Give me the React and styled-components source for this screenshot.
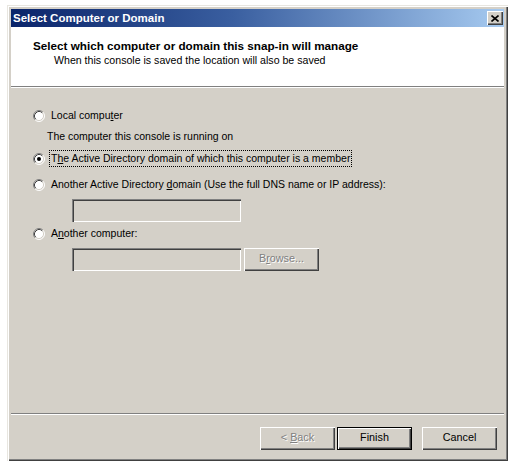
import React from "react";
import styled, { createGlobalStyle, css } from "styled-components";

const Global = createGlobalStyle`
  html, body { margin: 0; padding: 0; background: #ffffff; }
  body { font-family: "Liberation Sans", Arial, sans-serif; font-size: 10.5px; color: #000; }
  * { box-sizing: border-box; }
`;

const Page = styled.div`
  width: 516px;
  height: 468px;
  padding: 5px 0 0 7px;
`;

const Window = styled.div`
  width: 501px;
  height: 456px;
  display: flex;
  flex-direction: column;
  background: #d4d0c8;
  padding: 4px;
  box-shadow: inset 1px 1px 0 #e8e6e0, inset 2px 2px 0 #ffffff,
    inset -1px -1px 0 #404040, inset -2px -2px 0 #808080;
`;

const TitleBar = styled.div`
  height: 18px;
  flex: none;
  display: flex;
  align-items: center;
  justify-content: space-between;
  padding: 0 1px 0 2px;
  background: linear-gradient(to right, #0a246a 0%, #3a5fa0 45%, #a6caf0 100%);
`;

const Title = styled.span`
  color: #ffffff;
  font-family: "Liberation Sans", Arial, sans-serif;
  font-weight: bold;
  font-size: 11.5px;
`;

const CloseButton = styled.div`
  width: 16px;
  height: 14px;
  display: flex;
  align-items: center;
  justify-content: center;
  background: #d4d0c8;
  box-shadow: inset 1px 1px 0 #ffffff, inset -1px -1px 0 #404040,
    inset -2px -2px 0 #808080;
`;

const Header = styled.div`
  height: 59px;
  flex: none;
  background: #ffffff;
  padding: 10px 0 0 22px;
  border-bottom: 1px solid #808080;
`;

const HeaderTitle = styled.div`
  font-weight: bold;
  font-size: 11.7px;
  line-height: 15px;
`;

const HeaderSub = styled.div`
  font-size: 10.6px;
  line-height: 15px;
  margin-left: 21px;
`;

const Separator = styled.div`
  height: 2px;
  flex: none;
  border-top: 1px solid #808080;
  border-bottom: 1px solid #ffffff;
`;

const HeaderEdge = styled.div`
  height: 1px;
  flex: none;
  background: #ffffff;
`;

const Body = styled.div`
  flex: 1;
  display: flex;
  flex-direction: column;
  align-items: flex-start;
  padding: 19px 0 0 22px;
`;

const OptionRow = styled.div`
  display: flex;
  align-items: center;
  height: 17px;
  gap: 4px;
  margin-top: ${(p) => p.$gap || 0}px;
`;

const Label = styled.span`
  display: inline-block;
  height: 17px;
  line-height: 15px;
  padding: 0 1px;
  border: 1px dotted ${(p) => (p.$focus ? "#000" : "transparent")};
  white-space: nowrap;
`;

const Note = styled.div`
  height: 17px;
  line-height: 17px;
  margin: ${(p) => p.$gap || 0}px 0 0 14px;
`;

const FieldRow = styled.div`
  display: flex;
  gap: 3px;
  margin: ${(p) => p.$gap || 0}px 0 0 39px;
`;

const TextBox = styled.div`
  width: 169px;
  height: 23px;
  background: #d4d0c8;
  box-shadow: inset 1px 1px 0 #808080, inset 2px 2px 0 #404040,
    inset -1px -1px 0 #ffffff, inset -2px -2px 0 #d4d0c8;
`;

const Button = styled.div`
  width: ${(p) => p.$w || 75}px;
  height: 23px;
  line-height: 21px;
  text-align: center;
  white-space: pre;
  background: #d4d0c8;
  font-size: 10.8px;
  box-shadow: inset 1px 1px 0 #ffffff, inset -1px -1px 0 #404040,
    inset -2px -2px 0 #808080;
  ${(p) =>
    p.$default &&
    css`
      border: 1px solid #000;
      line-height: 19px;
    `}
  ${(p) =>
    p.$disabled &&
    css`
      color: #808080;
      text-shadow: 1px 1px 0 #ffffff;
    `}
`;

const Footer = styled.div`
  flex: none;
  height: 42px;
  display: flex;
  justify-content: flex-end;
  align-items: flex-start;
  padding: 12px 7px 0 0;
`;

const Spacer = styled.div`
  width: ${(p) => p.$w}px;
  flex: none;
`;

const Key = styled.span`
  text-decoration: underline;
  text-underline-offset: 1px;
`;

function Radio({ checked }) {
  return (
    <svg width="12" height="12" viewBox="0 0 12 12" style={{ flex: "none" }}>
      <circle cx="6" cy="6" r="5" fill="#ffffff" />
      <path d="M2.11 9.89 A5.5 5.5 0 0 1 9.89 2.11" fill="none" stroke="#808080" strokeWidth="1" />
      <path d="M9.89 2.11 A5.5 5.5 0 0 1 2.11 9.89" fill="none" stroke="#ffffff" strokeWidth="1" />
      <path d="M2.82 9.18 A4.5 4.5 0 0 1 9.18 2.82" fill="none" stroke="#404040" strokeWidth="1" />
      <path d="M9.18 2.82 A4.5 4.5 0 0 1 2.82 9.18" fill="none" stroke="#d4d0c8" strokeWidth="1" />
      {checked && <circle cx="6" cy="6" r="2" fill="#000000" />}
    </svg>
  );
}

export default function App() {
  return (
    <>
      <Global />
      <Page>
        <Window>
          <TitleBar>
            <Title>Select Computer or Domain</Title>
            <CloseButton>
              <svg width="8" height="7" viewBox="0 0 8 7">
                <path d="M0.5 0.5 L7.5 6.5 M7.5 0.5 L0.5 6.5" stroke="#000" strokeWidth="1.6" />
              </svg>
            </CloseButton>
          </TitleBar>
          <HeaderEdge />
          <Header>
            <HeaderTitle>Select which computer or domain this snap-in will manage</HeaderTitle>
            <HeaderSub>When this console is saved the location will also be saved</HeaderSub>
          </Header>
          <HeaderEdge />
          <Body>
            <OptionRow>
              <Radio />
              <Label>
                Local compu<Key>t</Key>er
              </Label>
            </OptionRow>
            <Note $gap={4}>The computer this console is running on</Note>
            <OptionRow $gap={5}>
              <Radio checked />
              <Label $focus>
                T<Key>h</Key>e Active Directory domain of which this computer is a member
              </Label>
            </OptionRow>
            <OptionRow $gap={9}>
              <Radio />
              <Label>
                Another Active Directory <Key>d</Key>omain (Use the full DNS name or IP address):
              </Label>
            </OptionRow>
            <FieldRow $gap={6}>
              <TextBox />
            </FieldRow>
            <OptionRow $gap={3}>
              <Radio />
              <Label>
                A<Key>n</Key>other computer:
              </Label>
            </OptionRow>
            <FieldRow $gap={6}>
              <TextBox />
              <Button $disabled>
                B<Key>r</Key>owse...
              </Button>
            </FieldRow>
          </Body>
          <Separator />
          <Footer>
            <Button $disabled>
              {"< "}
              <Key>B</Key>ack
            </Button>
            <Spacer $w={2} />
            <Button $default>Finish</Button>
            <Spacer $w={10} />
            <Button>Cancel</Button>
          </Footer>
        </Window>
      </Page>
    </>
  );
}
